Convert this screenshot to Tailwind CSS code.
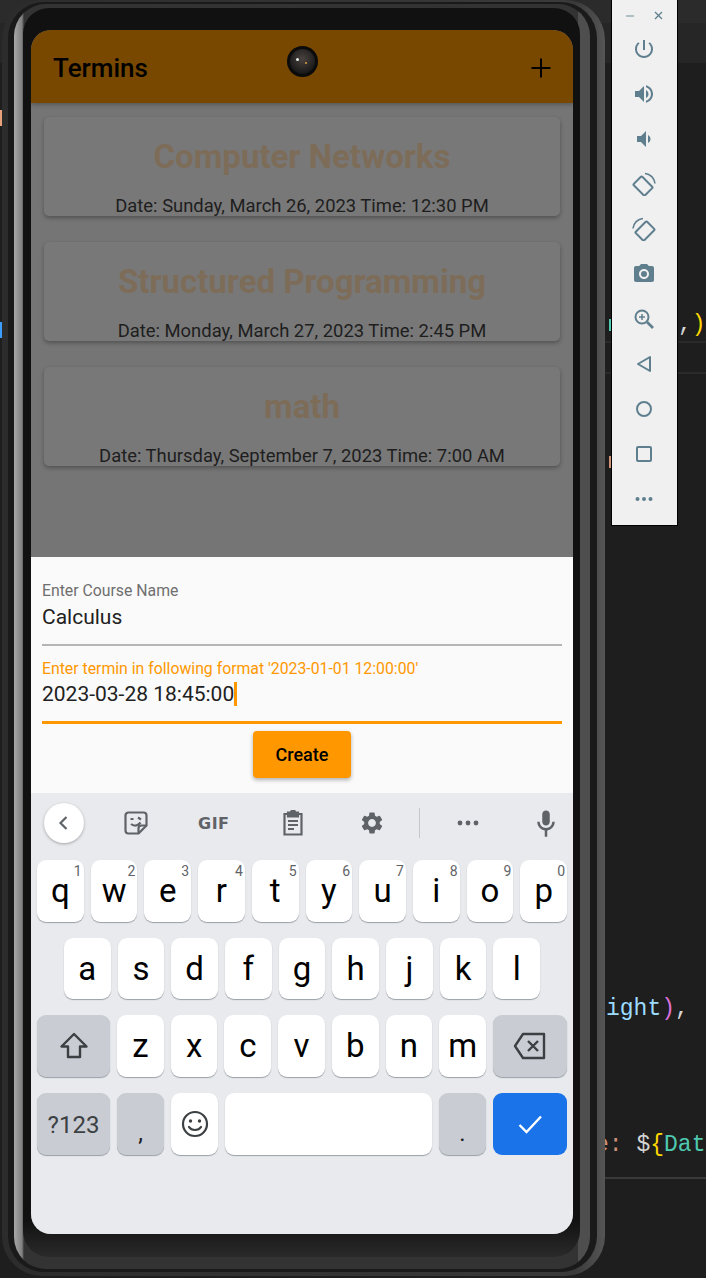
<!DOCTYPE html>
<html lang="en">
<head>
<meta charset="utf-8">
<title>Termins</title>
<script src="https://cdn.jsdelivr.net/npm/@tailwindcss/browser@4"></script>
</head>
<body class="bg-[#1e1e1e] overflow-hidden font-['Roboto',sans-serif]">
<div class="relative w-[706px] h-[1278px] overflow-hidden">

  <!-- Editor behind the emulator -->
  <div class="h-[23px] bg-[#2b2b2b]"></div>
  <div class="h-[40px] bg-[#262626]"></div>
  <div class="absolute left-[605px] top-[341px] w-[101px] h-[2px] bg-[#2a2a2a]"></div>
  <div class="absolute left-[605px] top-[372px] w-[101px] h-[2px] bg-[#2a2a2a]"></div>
  <div class="absolute left-[605px] top-[1177px] w-[101px] h-[2px] bg-[#3a3a3a]"></div>
  <div class="absolute left-[0px] top-[110px] w-[2px] h-[16px] bg-[#e8a27a]"></div>
  <div class="absolute left-[0px] top-[322px] w-[2px] h-[16px] bg-[#3b9dff]"></div>
  <div class="absolute left-[609px] top-[319px] w-[2px] h-[12px] bg-[#4ec9b0]"></div>
  <div class="absolute left-[609px] top-[456px] w-[2px] h-[12px] bg-[#ce9178]"></div>
  <span class="absolute left-[678px] top-[310px] whitespace-pre text-[23px] leading-[30px] text-[#d4d4d4] font-['Liberation_Mono',monospace]">,<span class="text-[#ffd700]">)</span></span>
  <span class="absolute left-[606px] top-[994px] whitespace-pre text-[23px] leading-[30px] text-[#9cdcfe] font-['Liberation_Mono',monospace]">ight<span class="text-[#da70d6]">)</span><span class="text-[#d4d4d4]">,</span></span>
  <span class="absolute left-[595px] top-[1130px] whitespace-pre text-[23px] leading-[30px] text-[#ce9178] font-['Liberation_Mono',monospace]">e: <span class="text-[#d4d4d4]">$</span><span class="text-[#ffd700]">{</span><span class="text-[#4ec9b0]">Dat</span></span>

  <!-- Emulator side toolbar -->
  <div class="absolute left-[611px] top-[-1px] w-[67px] h-[527px] bg-[#f0f0f0] border border-black pr-[1px] flex flex-col items-center text-[#5f7f8f]">
    <div class="h-[30px] w-full flex items-center justify-center gap-[20px] pt-[1px]">
      <svg width="8" height="8" viewBox="0 0 8 8"><path d="M0 4h8" stroke="#9fb2bb" stroke-width="1.6"/></svg>
      <svg width="9" height="9" viewBox="0 0 9 9"><path d="M1 1l7 7M8 1l-7 7" stroke="currentColor" stroke-width="1.3"/></svg>
    </div>
    <div class="flex flex-col items-center mt-[7px] gap-[21px]">
      <svg class="w-[24px] h-[24px]" viewBox="0 0 24 24" fill="currentColor"><path d="M13 3h-2v10h2V3zm4.83 2.17l-1.42 1.42C17.99 7.86 19 9.81 19 12c0 3.87-3.13 7-7 7s-7-3.13-7-7c0-2.19 1.01-4.14 2.58-5.42L6.17 5.17C4.23 6.82 3 9.26 3 12c0 4.97 4.03 9 9 9s9-4.03 9-9c0-2.74-1.23-5.18-3.17-6.83z"/></svg>
      <svg class="w-[24px] h-[24px]" viewBox="0 0 24 24" fill="currentColor"><path d="M3 9v6h4l5 5V4L7 9H3zm13.5 3c0-1.77-1.02-3.29-2.5-4.03v8.05c1.48-.73 2.5-2.25 2.5-4.02zM14 3.23v2.06c2.89.86 5 3.54 5 6.71s-2.11 5.85-5 6.71v2.06c4.01-.91 7-4.49 7-8.77s-2.99-7.86-7-8.77z"/></svg>
      <svg class="w-[24px] h-[24px]" viewBox="0 0 24 24" fill="currentColor"><path d="M18.5 12c0-1.77-1.02-3.29-2.5-4.03v8.05c1.48-.73 2.5-2.25 2.5-4.02zM5 9v6h4l5 5V4L9 9H5z"/></svg>
      <svg class="w-[24px] h-[24px]" viewBox="0 0 24 24" fill="none" stroke="currentColor" stroke-width="2"><rect x="5" y="6" width="12" height="16" rx="1" transform="rotate(-45 11 14)"/><path d="M13 1.500a11 11 0 0 1 10 10" stroke-width="1.600"/></svg>
      <svg class="w-[24px] h-[24px]" viewBox="0 0 24 24" fill="none" stroke="currentColor" stroke-width="2"><rect x="7" y="6" width="12" height="16" rx="1" transform="rotate(45 13 14)"/><path d="M1 11.500a11 11 0 0 1 10-10" stroke-width="1.600"/></svg>
      <svg class="w-[24px] h-[24px]" viewBox="0 0 24 24" fill="currentColor"><path d="M9 2L7.17 4H4c-1.1 0-2 .9-2 2v12c0 1.1.9 2 2 2h16c1.1 0 2-.9 2-2V6c0-1.1-.9-2-2-2h-3.17L15 2H9zm3 15c-2.76 0-5-2.24-5-5s2.24-5 5-5 5 2.24 5 5-2.24 5-5 5z"/><circle cx="12" cy="12" r="3"/></svg>
      <svg class="w-[24px] h-[24px]" viewBox="0 0 24 24" fill="none" stroke="currentColor" stroke-width="2"><circle cx="10" cy="10" r="6.5"/><path d="M15 15l6 6" stroke-width="2.6"/><path d="M10 7v6M7 10h6" stroke-width="1.5"/></svg>
      <svg class="w-[24px] h-[24px]" viewBox="0 0 24 24" fill="none" stroke="currentColor" stroke-width="2" stroke-linejoin="round"><path d="M18 5v14L6 12z"/></svg>
      <svg class="w-[24px] h-[24px]" viewBox="0 0 24 24" fill="none" stroke="currentColor" stroke-width="2"><circle cx="12" cy="12" r="7"/></svg>
      <svg class="w-[24px] h-[24px]" viewBox="0 0 24 24" fill="none" stroke="currentColor" stroke-width="2"><rect x="5" y="5" width="14" height="14" rx="1"/></svg>
      <svg class="w-[24px] h-[24px]" viewBox="0 0 24 24" fill="currentColor"><circle cx="5.5" cy="12" r="2"/><circle cx="12" cy="12" r="2"/><circle cx="18.5" cy="12" r="2"/></svg>
    </div>
  </div>

  <!-- Phone frame -->
  <div class="absolute left-[2px] top-0 rounded-[40px] bg-[linear-gradient(to_right,#2c2c2c,#3a3a3a_95%,#555555)] pt-[2px] pl-[6px] pr-[8px] pb-[4px]">
    <div class="rounded-[36px] bg-[#1a1a1a] pt-[2px] pl-[6px] pr-[7px] pb-[3px]">
      <div class="rounded-[32px] bg-[linear-gradient(to_right,#a8a8a8_0,#808080_8px,#333333_10px,#333333_98%,#4e4e4e_98%)] pt-[4px] pl-[9px] pr-[10px] pb-[12px]">
        <div class="relative rounded-[26px] bg-[linear-gradient(to_bottom,#111111_97%,#2a2a2a)] pt-[22px] pl-[8px] pr-[7px] pb-[23px]">

          <!-- Screen -->
          <div class="w-[542px] h-[1204px] rounded-[20px] overflow-hidden flex flex-col bg-[#757575]">
            <header class="relative z-10 h-[73px] shrink-0 bg-[#784800] flex items-center justify-between pl-[22px] pr-[20px] pt-[3px] shadow-[0_2px_4px_rgba(0,0,0,0.25)]">
              <h1 class="text-[26px] font-medium text-black">Termins</h1>
              <svg class="w-[24px] h-[24px]" viewBox="0 0 24 24"><path d="M12 2.5v19M2.5 12h19" stroke="#000" stroke-width="2"/></svg>
            </header>

            <main class="h-[454px] shrink-0 px-[13px] pt-[14px] flex flex-col gap-[26px]">
              <article class="h-[99px] rounded-[5px] bg-[#787878] shadow-[0_2px_4px_rgba(0,0,0,0.3)] flex flex-col items-center pt-[20px]">
                <h2 class="text-[33px] leading-[40px] font-bold text-[#7d6c58]">Computer Networks</h2>
                <p class="mt-[17px] text-[18.4px] leading-[24px] text-[#1e1e1e]">Date: Sunday, March 26, 2023 Time: 12:30 PM</p>
              </article>
              <article class="h-[99px] rounded-[5px] bg-[#787878] shadow-[0_2px_4px_rgba(0,0,0,0.3)] flex flex-col items-center pt-[20px]">
                <h2 class="text-[33px] leading-[40px] font-bold text-[#7d6c58]">Structured Programming</h2>
                <p class="mt-[17px] text-[18.4px] leading-[24px] text-[#1e1e1e]">Date: Monday, March 27, 2023 Time: 2:45 PM</p>
              </article>
              <article class="h-[99px] rounded-[5px] bg-[#787878] shadow-[0_2px_4px_rgba(0,0,0,0.3)] flex flex-col items-center pt-[20px]">
                <h2 class="text-[33px] leading-[40px] font-bold text-[#7d6c58]">math</h2>
                <p class="mt-[17px] text-[18.4px] leading-[24px] text-[#1e1e1e]">Date: Thursday, September 7, 2023 Time: 7:00 AM</p>
              </article>
            </main>

            <!-- Bottom sheet form -->
            <section class="h-[236px] shrink-0 bg-[#fafafa] px-[11px] flex flex-col">
              <div class="h-[89px] shrink-0 border-b-2 border-[#b5b5b5] pt-[25px]">
                <p class="text-[15.8px] leading-[18px] text-[#6f6f6f]">Enter Course Name</p>
                <p class="mt-[3px] text-[21px] leading-[28px] text-[#212121]">Calculus</p>
              </div>
              <div class="h-[78px] shrink-0 border-b-[3px] border-[#ff9800] pt-[14px]">
                <p class="text-[15.8px] leading-[18px] text-[#ff9800]">Enter termin in following format '2023-01-01 12:00:00'</p>
                <div class="mt-[2px] flex items-center h-[28px]">
                  <span class="text-[21px] leading-[28px] text-[#212121]">2023-03-28 18:45:00</span>
                  <span class="w-[3px] h-[24px] bg-[#ff9800]"></span>
                </div>
              </div>
              <button class="self-center mt-[7px] w-[98px] h-[47px] rounded-[4px] bg-[#ff9800] text-[18px] font-medium text-black shadow-[0_2px_4px_rgba(0,0,0,0.3)]">Create</button>
            </section>

            <!-- Keyboard -->
            <section class="h-[441px] shrink-0 bg-[#e8eaed] text-[#5f6368]">
              <div class="h-[67px] relative pt-[10px] pl-[13px]">
                <div class="w-[40px] h-[40px] rounded-full bg-white shadow-[0_1px_3px_rgba(0,0,0,0.3)] flex items-center justify-center">
                  <svg class="w-[20px] h-[20px]" viewBox="0 0 20 20" fill="none"><path d="M12.5 4l-6 6 6 6" stroke="#5f6368" stroke-width="2.2"/></svg>
                </div>
                <svg class="absolute left-[92px] top-[17px] w-[26px] h-[26px]" viewBox="0 0 26 26" fill="none" stroke="#5f6368" stroke-width="2.2" stroke-linejoin="round"><path d="M5.5 2.5h15a3 3 0 0 1 3 3v10l-8 8h-10a3 3 0 0 1-3-3v-15a3 3 0 0 1 3-3z"/><path d="M15.5 23.5v-5a3 3 0 0 1 3-3h5"/><path d="M7.5 9h3M15 7.5l3 2M8 14c3 2.5 7 2 9.500-1.500"/></svg>
                <span class="absolute left-[167px] top-[21px] text-[16px] leading-[20px] font-bold tracking-[0.5px] text-[#5f6368] font-['DejaVu_Sans',sans-serif]">GIF</span>
                <svg class="absolute left-[250px] top-[17px] w-[24px] h-[26px]" viewBox="0 0 24 26" fill="none" stroke="#5f6368" stroke-width="2.200"><path d="M7 4H3.500v20.500h17V4H17"/><path d="M7 2.500h3a2 2 0 0 1 4 0h3v4H7z" fill="#5f6368"/><path d="M7 11h10M7 15h10M7 19h6" stroke-width="1.800"/></svg>
                <svg class="absolute left-[328px] top-[17px] w-[26px] h-[26px]" viewBox="0 0 24 24" fill="#5f6368"><path d="M19.14 12.94c.04-.3.06-.61.06-.94 0-.32-.02-.64-.07-.94l2.03-1.58a.49.49 0 0 0 .12-.61l-1.92-3.32a.488.488 0 0 0-.59-.22l-2.39.96c-.5-.38-1.03-.7-1.62-.94l-.36-2.54a.484.484 0 0 0-.48-.41h-3.84c-.24 0-.43.17-.47.41l-.36 2.54c-.59.24-1.13.57-1.62.94l-2.39-.96c-.22-.08-.47 0-.59.22L2.74 8.87c-.12.21-.08.47.12.61l2.03 1.58c-.05.3-.09.63-.09.94s.02.64.07.94l-2.03 1.58a.49.49 0 0 0-.12.61l1.92 3.32c.12.22.37.29.59.22l2.39-.96c.5.38 1.03.7 1.62.94l.36 2.54c.05.24.24.41.48.41h3.84c.24 0 .44-.17.47-.41l.36-2.54c.59-.24 1.13-.56 1.62-.94l2.39.96c.22.08.47 0 .59-.22l1.92-3.32c.12-.22.07-.47-.12-.61l-2.01-1.58zM12 15.6c-1.98 0-3.6-1.62-3.6-3.6s1.62-3.6 3.6-3.6 3.6 1.62 3.6 3.6-1.62 3.6-3.6 3.6z"/></svg>
                <div class="absolute left-[388px] top-[15px] w-[1px] h-[30px] bg-[#c4c7cc]"></div>
                <svg class="absolute left-[425px] top-[22px] w-[24px] h-[16px]" viewBox="0 0 24 16" fill="#5f6368"><circle cx="4" cy="8" r="2.400"/><circle cx="12" cy="8" r="2.400"/><circle cx="20" cy="8" r="2.400"/></svg>
                <svg class="absolute left-[500px] top-[15px] w-[30px] h-[30px]" viewBox="0 0 24 24" fill="#5f6368"><path d="M12 14c1.660 0 3-1.340 3-3V5c0-1.660-1.340-3-3-3S9 3.340 9 5v6c0 1.660 1.340 3 3 3z"/><path d="M17 11c0 2.760-2.240 5-5 5s-5-2.240-5-5H5c0 3.530 2.610 6.430 6 6.920V23h2v-5.080c3.390-.49 6-3.390 6-6.920h-2z"/></svg>
              </div>

              <div class="px-[6px] flex flex-col gap-[16px]">
                <div id="row-top" class="flex gap-[7px] h-[62px]"></div>
                <div id="row-home" class="flex gap-[7px] h-[61px] px-[27px]"></div>
                <div class="flex gap-[7px] h-[62px]">
                  <div class="w-[73px] rounded-[9px] bg-[#c9ccd3] shadow-[0_1px_1px_#9aa0a6] flex items-center justify-center">
                    <svg class="w-[32px] h-[32px]" viewBox="0 0 32 32" fill="none" stroke="#3c4043" stroke-width="2.400" stroke-linejoin="round"><path d="M16 4L3.500 16.500H10V27h12V16.500h6.500z"/></svg>
                  </div>
                  <div id="row-bottom" class="flex gap-[7px] flex-1"></div>
                  <div class="w-[74px] rounded-[9px] bg-[#c9ccd3] shadow-[0_1px_1px_#9aa0a6] flex items-center justify-center">
                    <svg class="w-[34px] h-[30px]" viewBox="0 0 34 30" fill="none" stroke="#3c4043" stroke-width="2.400" stroke-linejoin="round"><path d="M10 3h21v24H10L2 15z"/><path d="M15 10l10 10M25 10L15 20"/></svg>
                  </div>
                </div>
                <div class="flex gap-[7px] h-[62px]">
                  <div class="w-[73px] rounded-[9px] bg-[#c9ccd3] shadow-[0_1px_1px_#9aa0a6] flex items-center justify-center pt-[1px] text-[24px] text-[#3c4043]">?123</div>
                  <div class="w-[47px] rounded-[9px] bg-[#c9ccd3] shadow-[0_1px_1px_#9aa0a6] flex items-end justify-center pb-[10px] text-[24px] leading-[24px] text-[#202124]">,</div>
                  <div class="w-[47px] rounded-[9px] bg-white shadow-[0_1px_1px_#9aa0a6] flex items-center justify-center">
                    <svg class="w-[30px] h-[30px]" viewBox="0 0 30 30" fill="none" stroke="#3c4043" stroke-width="2.200"><circle cx="15" cy="15" r="12"/><circle cx="10.500" cy="12" r="1.700" fill="#3c4043" stroke="none"/><circle cx="19.500" cy="12" r="1.700" fill="#3c4043" stroke="none"/><path d="M9 18c2.500 4 9.500 4 12 0" stroke-linecap="round"/></svg>
                  </div>
                  <div class="flex-1 rounded-[9px] bg-white shadow-[0_1px_1px_#9aa0a6]"></div>
                  <div class="w-[47px] rounded-[9px] bg-[#c9ccd3] shadow-[0_1px_1px_#9aa0a6] flex items-end justify-center pb-[10px] text-[24px] leading-[24px] text-[#202124]">.</div>
                  <div class="w-[74px] rounded-[9px] bg-[#1a73e8] flex items-center justify-center">
                    <svg class="w-[26px] h-[26px]" viewBox="0 0 26 26" fill="none" stroke="#fff" stroke-width="2.400"><path d="M2.500 14l7 7L24 5.500"/></svg>
                  </div>
                </div>
              </div>
            </section>
          </div>

          <!-- Front camera -->
          <div class="absolute z-20 left-[264px] top-[38px] w-[31px] h-[31px] rounded-full bg-[#0b0b0b] flex items-center justify-center">
            <div class="relative w-[25px] h-[25px] rounded-full bg-[radial-gradient(circle_at_50%_40%,#4a4340,#181818_75%)]">
              <span class="absolute left-[6px] top-[9px] w-[3px] h-[3px] rounded-full bg-[#e8efe8]"></span>
              <span class="absolute left-[15px] top-[13px] w-[2px] h-[2px] rounded-full bg-[#d8a040]"></span>
            </div>
          </div>
        </div>
      </div>
    </div>
  </div>
</div>

<script>
// keyboard letters, number hint goes in the corner
const KEY_CLASS = 'relative flex-1 rounded-[9px] bg-white shadow-[0_1px_1px_#9aa0a6] flex items-center justify-center text-[33px] text-black';
const HINT_CLASS = 'absolute right-[2px] top-[2px] text-[14px] leading-[18px] text-[#5f6368]';

function renderKeys(rowId, letters, hints) {
    document.getElementById(rowId).innerHTML = letters.split('').map((letter, i) => {
        const hint = hints ? `<span class="${HINT_CLASS}">${hints[i]}</span>` : '';
        return `<div class="${KEY_CLASS}">${letter}${hint}</div>`;
    }).join('');
}

renderKeys('row-top', 'qwertyuiop', '1234567890');
renderKeys('row-home', 'asdfghjkl');
renderKeys('row-bottom', 'zxcvbnm');
</script>
</body>
</html>
